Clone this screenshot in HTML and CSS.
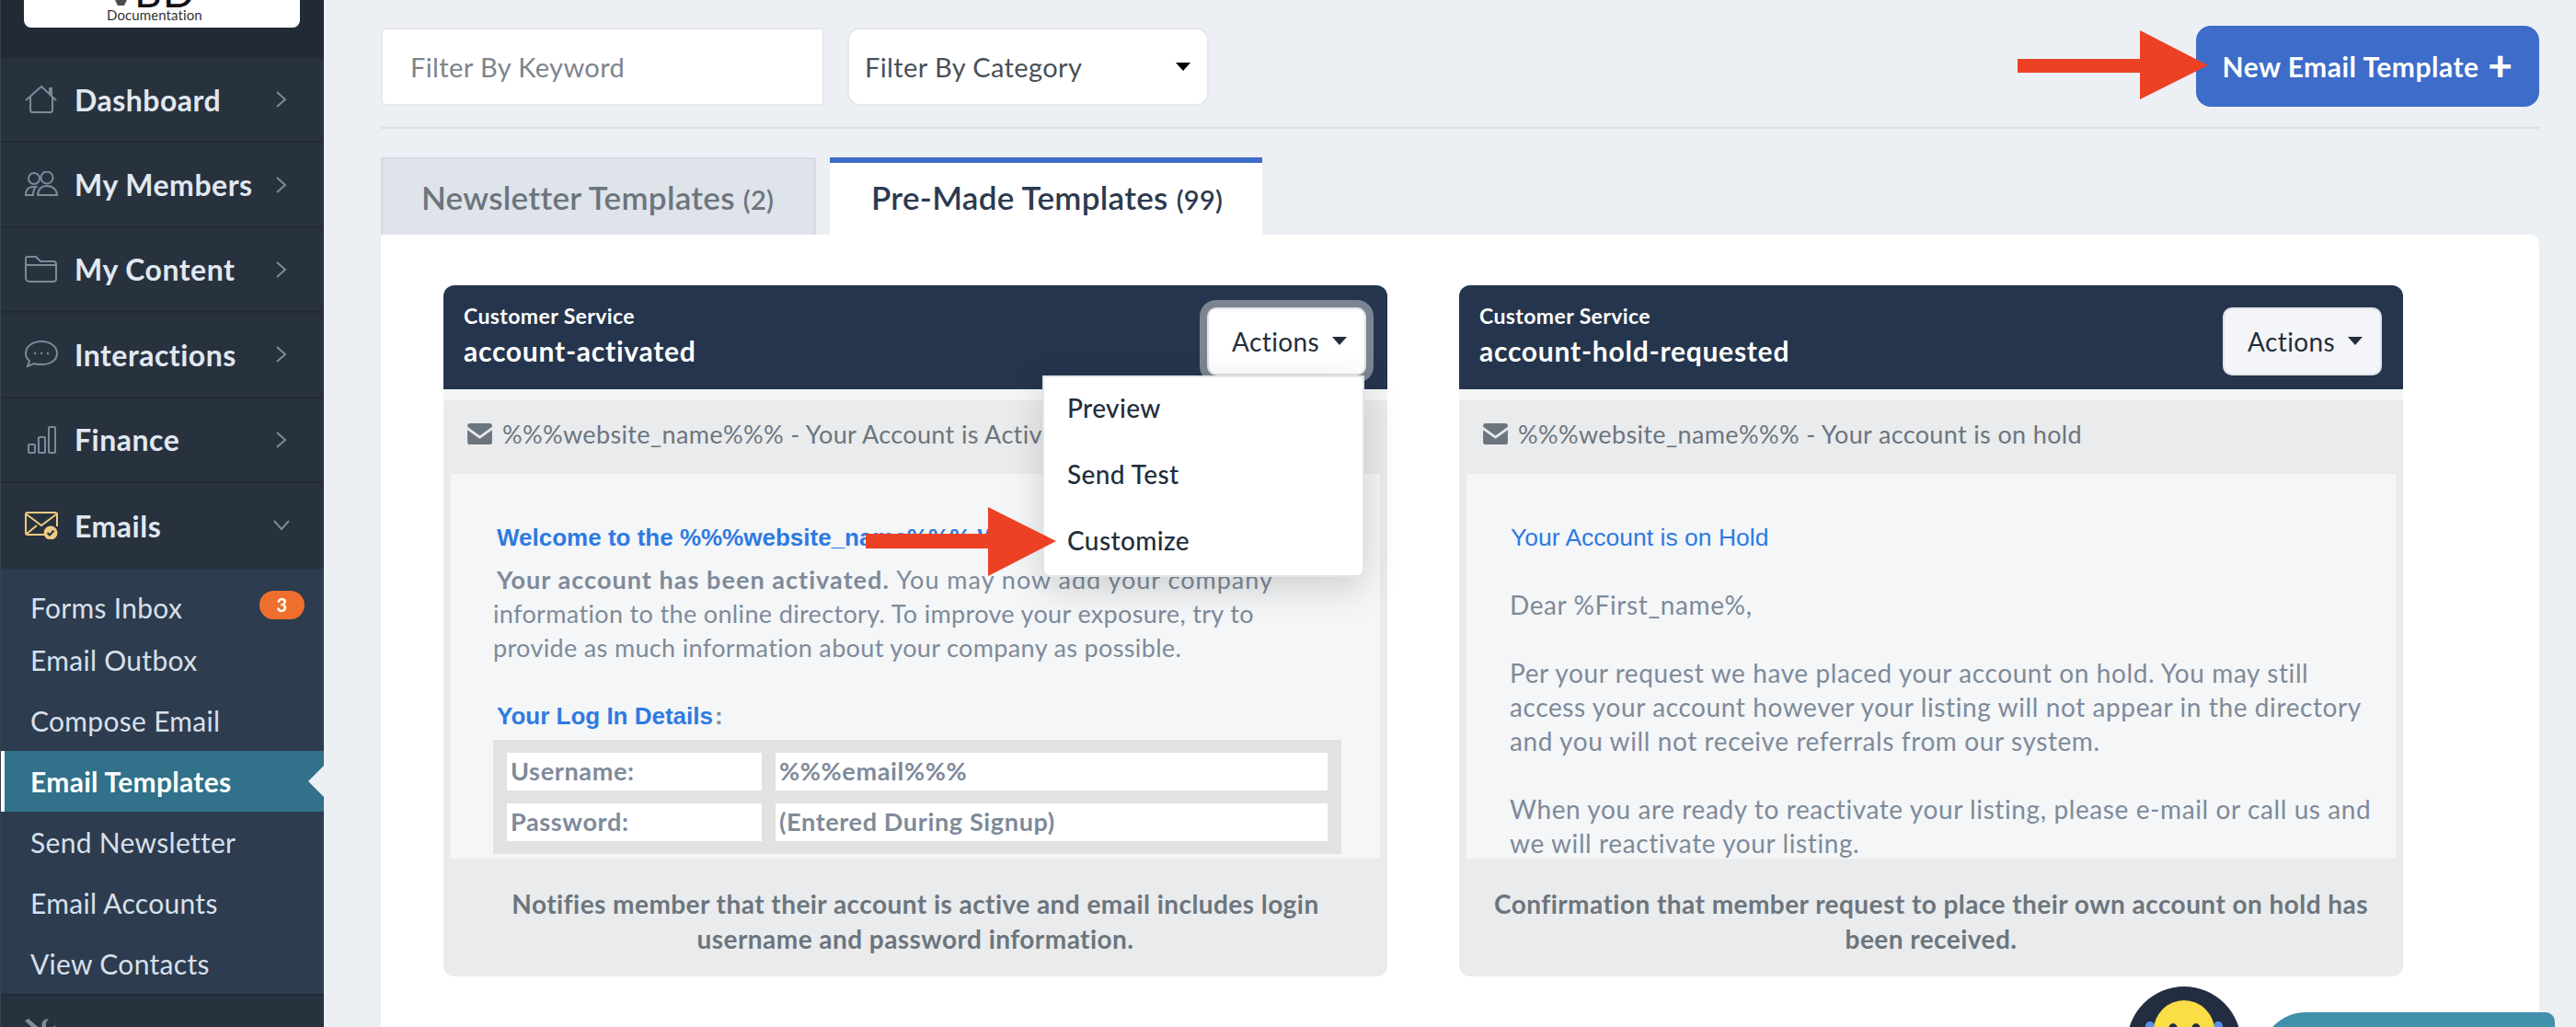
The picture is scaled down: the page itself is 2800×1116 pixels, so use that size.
FILE: index.html
```html
<!DOCTYPE html>
<html lang="en">
<head>
  <meta charset="UTF-8" />
  <title>Email Templates</title>
  <link rel="stylesheet" href="styles.css">
</head>
<body>
  <div class="page">
    <aside class="sidebar">
      <div class="logo-wrap">
        <div class="logo">
          <svg class="logo-mark" viewBox="0 0 12 7"><path d="M0 1h12M1 3h10M2 5h8" /></svg>
          <span class="logo-bd">BD</span>
          <span class="logo-sub">Documentation</span>
        </div>
      </div>

      <a class="nav-item">
        <svg class="nav-icon" viewBox="0 0 36 30"><path d="M1 16 18 1l16 15M6 12v15a2 2 0 0 0 2 2h20a2 2 0 0 0 2-2V12M27 9V3h2v8" /></svg>
        <span>Dashboard</span>
        <svg class="chev" viewBox="0 0 12 20"><path d="M1 2l9 8-9 8" /></svg>
      </a>
      <a class="nav-item">
        <svg class="nav-icon" viewBox="0 0 36 30"><circle cx="10" cy="8" r="6" /><circle cx="24" cy="7" r="6.5" /><path d="M1 26c0-6 3-9 8-9h3c-2 2-3 5-3 9zM14 26c0-6 4-10 10-10s11 4 11 10z" /></svg>
        <span>My Members</span>
        <svg class="chev" viewBox="0 0 12 20"><path d="M1 2l9 8-9 8" /></svg>
      </a>
      <a class="nav-item">
        <svg class="nav-icon" viewBox="0 0 36 30"><path d="M1 24V3a2 2 0 0 1 2-2h9l5 5h14a3 3 0 0 1 3 3v16a3 3 0 0 1-3 3H5a4 4 0 0 1-4-4zM1 10h33" /></svg>
        <span>My Content</span>
        <svg class="chev" viewBox="0 0 12 20"><path d="M1 2l9 8-9 8" /></svg>
      </a>
      <a class="nav-item">
        <svg class="nav-icon" viewBox="0 0 36 30"><path d="M18 1c9 0 17 5 17 13s-8 12-17 12c-3 0-6 0-8 -1l-7 3 2-6c-3-2-4-5-4-8C1 6 9 1 18 1z" /><circle class="dot" cx="11" cy="14" r="1.2" /><circle class="dot" cx="18" cy="14" r="1.2" /><circle class="dot" cx="25" cy="14" r="1.2" /></svg>
        <span>Interactions</span>
        <svg class="chev" viewBox="0 0 12 20"><path d="M1 2l9 8-9 8" /></svg>
      </a>
      <a class="nav-item">
        <svg class="nav-icon" viewBox="0 0 36 30"><rect x="4" y="20" width="7" height="9" rx="1" /><rect x="15" y="12" width="7" height="17" rx="1" /><rect x="26" y="1" width="7" height="28" rx="1" /></svg>
        <span>Finance</span>
        <svg class="chev" viewBox="0 0 12 20"><path d="M1 2l9 8-9 8" /></svg>
      </a>
      <a class="nav-item nav-open">
        <svg class="nav-icon nav-icon-mail" viewBox="0 0 36 30"><path d="M22 25H3a2 2 0 0 1-2-2V3a2 2 0 0 1 2-2h30a2 2 0 0 1 2 2v13M2 3l16 12L34 3M2 24l11-9" /><circle class="check-bg" cx="28" cy="23" r="7.5" /><path class="check" d="M24.5 23l2.500 2.500 4.500-5" /></svg>
        <span>Emails</span>
        <svg class="chev chev-down" viewBox="0 0 20 12"><path d="M2 1l8 9 8-9" /></svg>
      </a>

      <nav class="subnav">
        <a class="sub-item">Forms Inbox<span class="badge">3</span></a>
        <a class="sub-item sub-second">Email Outbox</a>
        <a class="sub-item">Compose Email</a>
        <a class="sub-item active">Email Templates</a>
        <a class="sub-item">Send Newsletter</a>
        <a class="sub-item">Email Accounts</a>
        <a class="sub-item">View Contacts</a>
      </nav>

      <a class="nav-item nav-last">
        <svg class="nav-icon" viewBox="0 0 36 30"><path class="fill-icon" d="M0 2l4-2 14 12-4 4zM26 0c-6 0-9 5-7 10l-15 15 4 4 15-15c5 2 10-1 10-7l-5 4-5-2 0-5z" /></svg>
      </a>
    </aside>

    <main class="main">
      <div class="toolbar">
        <div class="filters">
          <div class="filter-input">Filter By Keyword</div>
          <div class="filter-select">Filter By Category<i class="caret caret-black"></i></div>
        </div>
        <button class="btn-new">New Email Template <b class="plus">+</b></button>
      </div>
      <div class="divider"></div>

      <div class="tabs">
        <div class="tab">Newsletter Templates <small>(2)</small></div>
        <div class="tab tab-active">Pre-Made Templates <small>(99)</small></div>
      </div>

      <section class="panel">
        <article class="card">
          <header class="card-head">
            <div>
              <div class="card-cat">Customer Service</div>
              <div class="card-name">account-activated</div>
            </div>
            <div class="actions">
              <button class="btn-actions is-focus">Actions<i class="caret"></i></button>
              <div class="menu">
                <a>Preview</a>
                <a>Send Test</a>
                <a>Customize</a>
              </div>
            </div>
          </header>
          <div class="card-stripe"></div>
          <div class="card-subject">
            <svg class="mail" viewBox="0 0 28 24"><path d="M3 0h22a3 3 0 0 1 3 3v1L14 14 0 4V3a3 3 0 0 1 3-3zM0 7.500l14 10 14-10V21a3 3 0 0 1-3 3H3a3 3 0 0 1-3-3z" /></svg>
            %%%website_name%%% - Your Account is Activated
          </div>
          <div class="preview preview-one">
            <div class="mail-title">Welcome to the %%%website_name%%% Website</div>
            <p class="mail-lead"><strong>Your account has been activated.</strong> <span class="lead-rest">You may now add your company</span> information to the online directory. To improve your exposure, try to provide as much information about your company as possible.</p>
            <div class="mail-title mail-title-2">Your Log In Details<span class="colon">:</span></div>
            <table class="details">
              <tr><td class="col-label">Username:</td><td>%%%email%%%</td></tr>
              <tr><td class="col-label">Password:</td><td>(Entered During Signup)</td></tr>
            </table>
          </div>
          <footer class="card-foot">Notifies member that their account is active and email includes login username and password information.</footer>
        </article>

        <article class="card">
          <header class="card-head">
            <div>
              <div class="card-cat">Customer Service</div>
              <div class="card-name">account-hold-requested</div>
            </div>
            <div class="actions">
              <button class="btn-actions">Actions<i class="caret"></i></button>
            </div>
          </header>
          <div class="card-stripe"></div>
          <div class="card-subject">
            <svg class="mail" viewBox="0 0 28 24"><path d="M3 0h22a3 3 0 0 1 3 3v1L14 14 0 4V3a3 3 0 0 1 3-3zM0 7.500l14 10 14-10V21a3 3 0 0 1-3 3H3a3 3 0 0 1-3-3z" /></svg>
            %%%website_name%%% - Your account is on hold
          </div>
          <div class="preview preview-two">
            <div class="hold-title">Your Account is on Hold</div>
            <p>Dear %First_name%,</p>
            <p>Per your request we have placed your account on hold. You may still<br>access your account however your listing will not appear in the directory<br>and you will not receive referrals from our system.</p>
            <p>When you are ready to reactivate your listing, please e-mail or call us and<br>we will reactivate your listing.</p>
          </div>
          <footer class="card-foot">Confirmation that member request to place their own account on hold has been received.</footer>
        </article>
      </section>
    </main>

    <svg class="arrow arrow-top" viewBox="0 0 207 75"><polygon points="0,31 133,31 133,0 207,38 133,75 133,46 0,46" /></svg>
    <svg class="arrow arrow-menu" viewBox="0 0 207 75"><polygon points="0,29 133,29 133,0 207,37 133,75 133,45 0,45" /></svg>

    <div class="chat-avatar">
      <svg viewBox="0 0 124 124">
        <circle cx="62" cy="62" r="62" fill="#222e40" />
        <rect x="20" y="38" width="10" height="30" rx="5" fill="#5b8fe6" />
        <rect x="94" y="38" width="10" height="30" rx="5" fill="#5b8fe6" />
        <circle cx="62" cy="48" r="33" fill="#fbdd45" />
        <ellipse cx="50" cy="47" rx="5" ry="7" fill="#222e40" />
        <ellipse cx="75" cy="47" rx="5" ry="7" fill="#222e40" />
      </svg>
    </div>
    <div class="chat-pill"></div>
  </div>
</body>
</html>
```

FILE: styles.css
```css
:root {
  --navy: #25354d;
  --blue: #3d6cc9;
  --link: #2f7ae0;
  --muted: #6c757d;
  --body-text: #7e8a99;
  --ink: #232d3b;
  --nav-text: #e1e8f0;
  --icon: #7e8a98;
  --page-bg: #eceff4;
}

* {
  box-sizing: border-box;
  margin: 0;
  padding: 0;
}

body {
  font-family: "Lato", "Noto Sans", sans-serif;
  background: var(--page-bg);
  overflow: hidden;
}

.page {
  position: relative;
  display: flex;
  width: 2800px;
  height: 1116px;
  overflow: hidden;
}

/* sidebar */
.sidebar {
  flex: 0 0 352px;
  background: #28323f;
  border-left: 1px solid #36414f;
  display: flex;
  flex-direction: column;
}

.logo-wrap {
  flex: none;
  height: 63px;
  background: #222a35;
  padding-left: 25px;
}

.logo {
  position: relative;
  width: 300px;
  height: 30px;
  background: #fff;
  border-radius: 0 0 8px 8px;
  overflow: hidden;
}

.logo-mark {
  position: absolute;
  left: 99px;
  top: 0;
  width: 13px;
  height: 7px;
  fill: none;
  stroke: #111;
  stroke-width: 1.4;
}

.logo-bd {
  position: absolute;
  left: 120px;
  bottom: 24px;
  font-size: 46px;
  line-height: 30px;
  color: #111;
  letter-spacing: 1px;
}

.logo-sub {
  position: absolute;
  left: 90px;
  bottom: 4px;
  font-size: 15px;
  line-height: 19px;
  letter-spacing: 0.1px;
  color: #333;
}

.nav-item {
  flex: none;
  display: flex;
  align-items: center;
  height: 92.4px;
  padding: 0 40px 0 26px;
  color: var(--nav-text);
  font-size: 32px;
  font-weight: 700;
  letter-spacing: 0.5px;
  border-bottom: 2px solid #222a35;
}

.nav-item span {
  flex: 1;
  margin-left: 18px;
}

.nav-icon {
  flex: none;
  width: 36px;
  height: 30px;
  fill: none;
  stroke: var(--icon);
  stroke-width: 2;
}

.nav-icon .dot {
  fill: var(--icon);
  stroke: none;
}

.nav-icon-mail {
  stroke: #f0ca82;
}

.nav-icon-mail .check-bg {
  fill: #f0ca82;
  stroke: none;
}

.nav-icon-mail .check {
  stroke: #28323f;
  stroke-width: 2;
}

.fill-icon {
  fill: var(--icon);
  stroke: none;
}

.chev {
  width: 12px;
  height: 20px;
  fill: none;
  stroke: var(--icon);
  stroke-width: 2;
}

.chev-down {
  width: 20px;
  height: 12px;
  margin-right: -4px;
}

.nav-open {
  border-bottom: none;
  height: 93px;
}

.nav-last {
  flex: 1;
  border-top: 2px solid #222a35;
  border-bottom: none;
  align-items: flex-start;
  padding-top: 25px;
}

.subnav {
  flex: none;
  background: #2d3c4f;
  padding-top: 9px;
  height: 462px;
}

.sub-item {
  position: relative;
  display: flex;
  align-items: center;
  height: 66px;
  padding-left: 32px;
  font-size: 30px;
  letter-spacing: 0.3px;
  color: #d8e0ea;
}

.sub-second {
  height: 48px;
  margin-bottom: 9px;
}

.sub-item.active {
  background: #317189;
  border-left: 4px solid #fff;
  padding-left: 28px;
  color: #fff;
  font-weight: 700;
}

.sub-item.active::after {
  content: "";
  position: absolute;
  right: 0;
  top: 16px;
  border: 17px solid transparent;
  border-left: 0;
  border-right: 17px solid var(--page-bg);
}

.badge {
  position: absolute;
  left: 281px;
  top: 15px;
  width: 49px;
  height: 31px;
  border-radius: 16px;
  background: #ee6f2d;
  color: #fff;
  font-size: 20px;
  font-weight: 700;
  line-height: 31px;
  text-align: center;
}

/* main */
.main {
  flex: 1;
  padding: 28px 40px 0 62px;
  min-width: 0;
}

.toolbar {
  display: flex;
  align-items: center;
  justify-content: space-between;
  height: 88px;
}

.filters {
  display: flex;
  gap: 26px;
}

.filter-input,
.filter-select {
  display: flex;
  align-items: center;
  height: 85px;
  background: #fff;
  border: 2px solid #e6e8ec;
  font-size: 29px;
  letter-spacing: 0.4px;
}

.filter-input {
  width: 482px;
  padding-left: 30px;
  color: #7d848c;
  border-radius: 6px 0 0 6px;
}

.filter-select {
  width: 393px;
  margin-left: -1px;
  padding: 0 18px 0 17px;
  color: #495057;
  border-radius: 14px;
  justify-content: space-between;
}

.caret {
  display: inline-block;
  width: 0;
  height: 0;
  border: 8px solid transparent;
  border-top: 9px solid var(--ink);
  border-bottom: 0;
}

.caret-black {
  border-top-color: #000;
}

.btn-new {
  width: 373px;
  height: 88px;
  background: var(--blue);
  border: none;
  border-radius: 16px;
  color: #fff;
  font-family: inherit;
  font-size: 30px;
  font-weight: 700;
  letter-spacing: 0.5px;
}

.plus {
  font-size: 46px;
  font-weight: 900;
  line-height: 30px;
  vertical-align: -4px;
  margin-left: 2px;
}

.divider {
  height: 2px;
  margin-top: 22px;
  background: #dcdee2;
}

.tabs {
  display: flex;
  gap: 15px;
  margin-top: 31px;
}

.tab {
  display: flex;
  align-items: baseline;
  gap: 9px;
  width: 473px;
  height: 84px;
  padding: 20px 0 0 42px;
  background: #dfe3ea;
  border: 2px solid #d5dbe5;
  border-bottom: none;
  color: #6c757d;
  font-size: 35px;
  font-weight: 600;
  letter-spacing: 0.3px;
}

.tab small {
  font-size: 29px;
}

.tab-active {
  width: 470px;
  background: #fff;
  border: none;
  border-top: 6px solid var(--blue);
  padding-top: 16px;
  padding-left: 45px;
  color: #2c3a4e;
}

.panel {
  display: grid;
  grid-template-columns: 1026px 1026px;
  gap: 78px;
  height: 900px;
  padding: 55px 68px;
  background: #fff;
  border-radius: 0 10px 0 0;
}

/* template cards */
.card {
  align-self: start;
  height: 751px;
  display: flex;
  flex-direction: column;
  background: #e9ebed;
  border-radius: 12px;
}

.card-head {
  flex: none;
  display: flex;
  align-items: center;
  justify-content: space-between;
  height: 113px;
  padding: 0 23px 6px 22px;
  background: var(--navy);
  color: #fff;
  border-radius: 12px 12px 0 0;
}

.card-cat {
  font-size: 23px;
  font-weight: 700;
  letter-spacing: 0.4px;
}

.card-name {
  margin-top: 6px;
  font-size: 30px;
  font-weight: 700;
  letter-spacing: 0.75px;
}

.actions {
  position: relative;
  margin-top: 14px;
}

.btn-actions {
  display: flex;
  align-items: center;
  gap: 14px;
  width: 173px;
  height: 74px;
  padding-left: 25px;
  background: #f4f5f8;
  border: 2px solid #e0e2e6;
  border-radius: 10px;
  color: var(--ink);
  font-family: inherit;
  font-size: 28px;
  letter-spacing: 0.4px;
}

.btn-actions.is-focus {
  background: #fff;
  box-shadow: 0 0 0 8px #7b8591;
}

.menu {
  position: absolute;
  top: 74px;
  right: 2px;
  z-index: 2;
  width: 350px;
  height: 219px;
  background: #fff;
  border: 2px solid #e3e5e8;
  border-radius: 0 0 8px 8px;
  box-shadow: 0 12px 40px rgba(0, 0, 0, 0.16);
}

.menu a {
  display: flex;
  align-items: center;
  height: 72px;
  padding-left: 25px;
  color: var(--ink);
  font-size: 28px;
  font-weight: 500;
  letter-spacing: 0.4px;
}

.menu a:first-child {
  margin-top: -3px;
}

.card-stripe {
  flex: none;
  height: 12px;
  background: #f4f5f7;
}

.card-subject {
  flex: none;
  display: flex;
  align-items: center;
  height: 80px;
  padding: 0 0 8px 26px;
  color: var(--muted);
  font-size: 27px;
  letter-spacing: 0.35px;
  white-space: nowrap;
  overflow: hidden;
}

.mail {
  flex: none;
  width: 27px;
  height: 23px;
  margin-right: 11px;
  fill: #6c757d;
}

.preview {
  flex: none;
  height: 418px;
  margin: 0 8px;
  background: #f4f6f8;
  overflow: hidden;
  color: var(--body-text);
  font-size: 27px;
  line-height: 37px;
  letter-spacing: 0.35px;
}

.preview-one {
  padding: 51px 40px 0 46px;
}

.mail-title {
  margin-left: 4px;
  color: var(--link);
  font-family: "Liberation Sans", Arial, sans-serif;
  font-size: 26px;
  font-weight: 700;
  line-height: 36px;
  letter-spacing: 0;
  white-space: nowrap;
}

.colon {
  color: var(--body-text);
  margin-left: 2px;
}

.mail-lead {
  margin-top: 9px;
}

.mail-lead strong {
  margin-left: 4px;
  letter-spacing: 1.05px;
}

.lead-rest {
  letter-spacing: 1px;
}

.mail-title-2 {
  margin-top: 38px;
}

.details {
  width: 922px;
  margin-top: 8px;
  border-spacing: 15px 14px;
  background: #e2e2e2;
  table-layout: fixed;
  font-weight: 700;
  letter-spacing: 0.65px;
}

.details td {
  height: 41px;
  padding: 0 0 2px 4px;
  background: #fff;
  line-height: 34px;
}

.col-label {
  width: 277px;
}

.preview-two {
  padding: 51px 20px 0 47px;
  font-size: 28px;
  letter-spacing: 0.6px;
  white-space: nowrap;
}

.preview-two p {
  margin-bottom: 37px;
}

.hold-title {
  margin: 0 0 37px 1px;
  color: var(--link);
  font-family: "Liberation Sans", Arial, sans-serif;
  font-size: 26.5px;
  line-height: 36px;
  letter-spacing: 0;
}

.card-foot {
  flex: 1;
  padding: 30px 30px 0;
  color: var(--muted);
  font-size: 28px;
  font-weight: 700;
  line-height: 38px;
  text-align: center;
  letter-spacing: 0.45px;
}

/* annotations and chat widget */
.arrow {
  position: absolute;
  z-index: 3;
  width: 207px;
  height: 75px;
  fill: #ec4124;
}

.arrow-top {
  left: 2193px;
  top: 33px;
}

.arrow-menu {
  left: 941px;
  top: 551px;
}

.chat-avatar {
  position: absolute;
  left: 2312px;
  top: 1072px;
  width: 124px;
  height: 124px;
}

.chat-pill {
  position: absolute;
  left: 2458px;
  top: 1100px;
  width: 319px;
  height: 80px;
  background: #4090ac;
  border-radius: 48px 10px 0 0;
}
```
